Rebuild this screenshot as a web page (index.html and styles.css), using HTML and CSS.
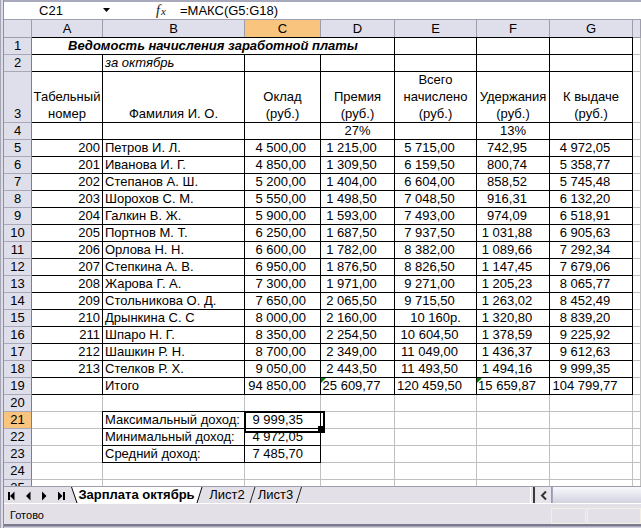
FILE: index.html
```html
<!DOCTYPE html>
<html lang="ru">
<head>
<meta charset="utf-8">
<title>Ведомость начисления заработной платы</title>
<link rel="stylesheet" href="styles.css">
</head>
<body>
<div class="app">
  <div class="frame"></div>
  <div class="main">
    <div class="fbar">
      <div class="namebox">C21</div>
      <div class="dd"><svg width="8" height="5" viewBox="0 0 8 5"><polygon points="0,0 7,0 3.5,4" fill="#000"/></svg></div>
      <div class="fxbox"><span class="fx-f">f</span><span class="fx-x">x</span></div>
      <div class="formula">=МАКС(G5:G18)</div>
    </div>

    <div class="sheet">
      <!-- column headers -->
      <div class="h"></div><div class="h">A</div><div class="h">B</div><div class="h hs">C</div><div class="h">D</div><div class="h">E</div><div class="h">F</div><div class="h">G</div><div class="h"></div>

      <!-- row 1 -->
      <div class="r">1</div><div class="g b t span4 title">Ведомость начисления заработной платы</div><div class="g b t"></div><div class="g b t"></div><div class="g b t"></div><div class="g"></div>
      <!-- row 2 -->
      <div class="r">2</div><div class="g b"></div><div class="g b al it">за октябрь</div><div class="g b"></div><div class="g b"></div><div class="g b"></div><div class="g b"></div><div class="g b"></div><div class="g"></div>
      <!-- row 3 -->
      <div class="r r3">3</div>
      <div class="g b hd3"><span>Табельный</span><span>номер</span></div>
      <div class="g b hd3"><span>Фамилия И. О.</span></div>
      <div class="g b hd3"><span>Оклад</span><span>(руб.)</span></div>
      <div class="g b hd3"><span>Премия</span><span>(руб.)</span></div>
      <div class="g b hd3"><span>Всего</span><span>начислено</span><span>(руб.)</span></div>
      <div class="g b hd3"><span>Удержания</span><span>(руб.)</span></div>
      <div class="g b hd3"><span>К выдаче</span><span>(руб.)</span></div>
      <div class="g"></div>
      <!-- row 4 -->
      <div class="r">4</div><div class="g b"></div><div class="g b"></div><div class="g b"></div><div class="g b ctr">27%</div><div class="g b"></div><div class="g b ctr">13%</div><div class="g b"></div><div class="g"></div>

      <!-- rows 5-18 -->
      <div class="r">5</div><div class="g b ar">200</div><div class="g b al">Петров И. Л.</div><div class="g b cr">4 500,00</div><div class="g b cc">1 215,00</div><div class="g b cc">5 715,00</div><div class="g b cc">742,95</div><div class="g b cc">4 972,05</div><div class="g"></div>
      <div class="r">6</div><div class="g b ar">201</div><div class="g b al">Иванова И. Г.</div><div class="g b cr">4 850,00</div><div class="g b cc">1 309,50</div><div class="g b cc">6 159,50</div><div class="g b cc">800,74</div><div class="g b cc">5 358,77</div><div class="g"></div>
      <div class="r">7</div><div class="g b ar">202</div><div class="g b al">Степанов А. Ш.</div><div class="g b cr">5 200,00</div><div class="g b cc">1 404,00</div><div class="g b cc">6 604,00</div><div class="g b cc">858,52</div><div class="g b cc">5 745,48</div><div class="g"></div>
      <div class="r">8</div><div class="g b ar">203</div><div class="g b al">Шорохов С. М.</div><div class="g b cr">5 550,00</div><div class="g b cc">1 498,50</div><div class="g b cc">7 048,50</div><div class="g b cc">916,31</div><div class="g b cc">6 132,20</div><div class="g"></div>
      <div class="r">9</div><div class="g b ar">204</div><div class="g b al">Галкин В. Ж.</div><div class="g b cr">5 900,00</div><div class="g b cc">1 593,00</div><div class="g b cc">7 493,00</div><div class="g b cc">974,09</div><div class="g b cc">6 518,91</div><div class="g"></div>
      <div class="r">10</div><div class="g b ar">205</div><div class="g b al">Портнов М. Т.</div><div class="g b cr">6 250,00</div><div class="g b cc">1 687,50</div><div class="g b cc">7 937,50</div><div class="g b cc">1 031,88</div><div class="g b cc">6 905,63</div><div class="g"></div>
      <div class="r">11</div><div class="g b ar">206</div><div class="g b al">Орлова Н. Н.</div><div class="g b cr">6 600,00</div><div class="g b cc">1 782,00</div><div class="g b cc">8 382,00</div><div class="g b cc">1 089,66</div><div class="g b cc">7 292,34</div><div class="g"></div>
      <div class="r">12</div><div class="g b ar">207</div><div class="g b al">Степкина А. В.</div><div class="g b cr">6 950,00</div><div class="g b cc">1 876,50</div><div class="g b cc">8 826,50</div><div class="g b cc">1 147,45</div><div class="g b cc">7 679,06</div><div class="g"></div>
      <div class="r">13</div><div class="g b ar">208</div><div class="g b al">Жарова Г. А.</div><div class="g b cr">7 300,00</div><div class="g b cc">1 971,00</div><div class="g b cc">9 271,00</div><div class="g b cc">1 205,23</div><div class="g b cc">8 065,77</div><div class="g"></div>
      <div class="r">14</div><div class="g b ar">209</div><div class="g b al">Стольникова О. Д.</div><div class="g b cr">7 650,00</div><div class="g b cc">2 065,50</div><div class="g b cc">9 715,50</div><div class="g b cc">1 263,02</div><div class="g b cc">8 452,49</div><div class="g"></div>
      <div class="r">15</div><div class="g b ar">210</div><div class="g b al">Дрынкина С. С</div><div class="g b cr">8 000,00</div><div class="g b cc">2 160,00</div><div class="g b ctr">10 160р.</div><div class="g b cc">1 320,80</div><div class="g b cc">8 839,20</div><div class="g"></div>
      <div class="r">16</div><div class="g b ar">211</div><div class="g b al">Шпаро Н. Г.</div><div class="g b cr">8 350,00</div><div class="g b cc">2 254,50</div><div class="g b cc">10 604,50</div><div class="g b cc">1 378,59</div><div class="g b cc">9 225,92</div><div class="g"></div>
      <div class="r">17</div><div class="g b ar">212</div><div class="g b al">Шашкин Р. Н.</div><div class="g b cr">8 700,00</div><div class="g b cc">2 349,00</div><div class="g b cc">11 049,00</div><div class="g b cc">1 436,37</div><div class="g b cc">9 612,63</div><div class="g"></div>
      <div class="r">18</div><div class="g b ar">213</div><div class="g b al">Стелков Р. Х.</div><div class="g b cr">9 050,00</div><div class="g b cc">2 443,50</div><div class="g b cc">11 493,50</div><div class="g b cc">1 494,16</div><div class="g b cc">9 999,35</div><div class="g"></div>
      <!-- row 19 -->
      <div class="r">19</div><div class="g b"></div><div class="g b al">Итого</div><div class="g b cr">94 850,00</div><div class="g b cc err">25 609,77</div><div class="g b cc">120 459,50</div><div class="g b cc err">15 659,87</div><div class="g b cc">104 799,77</div><div class="g"></div>
      <!-- row 20 -->
      <div class="r">20</div><div class="g"></div><div class="g"></div><div class="g"></div><div class="g"></div><div class="g"></div><div class="g"></div><div class="g"></div><div class="g"></div>
      <!-- rows 21-23 -->
      <div class="r hs">21</div><div class="g"></div><div class="g b tl al">Максимальный доход:</div><div class="g b t cr2 active">9 999,35</div><div class="g"></div><div class="g"></div><div class="g"></div><div class="g"></div><div class="g"></div>
      <div class="r">22</div><div class="g"></div><div class="g b l al">Минимальный доход:</div><div class="g b cr2">4 972,05</div><div class="g"></div><div class="g"></div><div class="g"></div><div class="g"></div><div class="g"></div>
      <div class="r">23</div><div class="g"></div><div class="g b l al">Средний доход:</div><div class="g b cr2">7 485,70</div><div class="g"></div><div class="g"></div><div class="g"></div><div class="g"></div><div class="g"></div>
      <!-- rows 24-25 -->
      <div class="r">24</div><div class="g"></div><div class="g"></div><div class="g"></div><div class="g"></div><div class="g"></div><div class="g"></div><div class="g"></div><div class="g"></div>
      <div class="r">25</div><div class="g"></div><div class="g"></div><div class="g"></div><div class="g"></div><div class="g"></div><div class="g"></div><div class="g"></div><div class="g"></div>
    </div>

    <div class="tabbar">
      <div class="nav">
        <svg width="67" height="16" viewBox="0 0 67 16">
          <rect x="4" y="5" width="2" height="8" fill="#000"/>
          <polygon points="6,9 10.5,4.5 10.5,13.5" fill="#000"/>
          <polygon points="22,9 26.5,4.5 26.5,13.5" fill="#000"/>
          <polygon points="38,4.5 42.5,9 38,13.5" fill="#000"/>
          <polygon points="54,4.5 58.5,9 54,13.5" fill="#000"/>
          <rect x="59" y="5" width="2" height="8" fill="#000"/>
        </svg>
      </div>
      <div class="tabs">
        <svg class="tabshape" width="231" height="16" viewBox="0 0 231 16">
          <polygon points="0,0 131,0 126,16 6,16" fill="#fff"/>
          <line x1="0.5" y1="0" x2="6" y2="16" stroke="#000" stroke-width="1"/>
          <line x1="131" y1="0" x2="126" y2="16" stroke="#000" stroke-width="1"/>
          <line x1="184" y1="0" x2="179" y2="16" stroke="#222" stroke-width="1"/>
          <line x1="230.5" y1="0" x2="225.5" y2="16" stroke="#222" stroke-width="1"/>
        </svg>
        <span class="tab act">Зарплата октябрь</span>
        <span class="tab t2">Лист2</span>
        <span class="tab t3">Лист3</span>
      </div>
      <div class="tabfill"></div>
      <div class="hscroll">
        <svg width="111" height="16" viewBox="0 0 111 16">
          <defs>
            <linearGradient id="thumb" x1="0" y1="0" x2="0" y2="1">
              <stop offset="0" stop-color="#f8f8fc"/>
              <stop offset="1" stop-color="#d2d2e0"/>
            </linearGradient>
          </defs>
          <rect x="0" y="0" width="1" height="16" fill="#ffffff"/>
          <rect x="3" y="0" width="2" height="16" fill="#3a3a3a"/>
          <rect x="6" y="0" width="16" height="16" fill="#e7e4ec"/>
          <rect x="21" y="0" width="1" height="16" fill="#9a9aae"/>
          <polyline points="16,4.5 12,8.5 16,12.5" fill="none" stroke="#333" stroke-width="2"/>
          <rect x="22" y="0" width="89" height="16" fill="url(#thumb)"/>
          <rect x="22" y="0" width="1" height="16" fill="#a8a8bc"/>
        </svg>
      </div>
    </div>

    <div class="status">
      <span class="ready">Готово</span>
      <span class="panel p1"></span>
      <span class="panel p2"></span>
    </div>
    <div class="bottom"></div>
  </div>
</div>
</body>
</html>
```

FILE: styles.css
```css
* { box-sizing: border-box; }
html, body { margin: 0; padding: 0; }
body {
  width: 641px;
  height: 528px;
  overflow: hidden;
  background: #fff;
  color: #000;
  font-family: "Liberation Sans", Arial, sans-serif;
  font-size: 13px;
}

.app { display: flex; width: 641px; height: 528px; overflow: hidden; }
.frame {
  width: 4px;
  flex: none;
  background: linear-gradient(to right, #a6a6b6 0 1px, #dcdce6 1px 3px, #8e8ea2 3px 4px);
}
.main { flex: 1; display: flex; flex-direction: column; min-width: 0; }

/* formula bar */
.fbar {
  height: 20px;
  flex: none;
  display: flex;
  border-top: 2px solid #a9a9bd;
  border-bottom: 1px solid #a0a0b0;
  background: #fff;
  line-height: 17px;
}
.namebox { width: 94px; text-align: center; }
.dd { width: 20px; display: flex; align-items: center; justify-content: center; padding-right: 2px; }
.dd svg { display: block; }
.fxbox {
  width: 60px;
  padding-left: 38px;
  font-family: "Liberation Serif", serif;
  font-style: italic;
  color: #111;
}
.fx-f { font-size: 14px; }
.fx-x { font-size: 11px; margin-left: 1px; }
.formula { padding-left: 2px; white-space: nowrap; }

/* sheet grid */
.sheet {
  height: 466px;
  flex: none;
  overflow: hidden;
  display: grid;
  grid-template-columns: 28px 71px 142px 76px 74px 82px 73px 83px 1fr;
  grid-template-rows: 18px 17px 17px 51px repeat(22, 17px);
}
.h {
  background: #dfdfec;
  border-right: 1px solid #9d9dab;
  border-bottom: 1px solid #9d9dab;
  text-align: center;
  line-height: 16px;
  padding-top: 1px;
}
.r {
  background: #dfdfec;
  border-right: 1px solid #7e7e8a;
  border-bottom: 1px solid #a8a8b8;
  text-align: center;
  line-height: 16px;
}
.r3 { display: flex; align-items: flex-end; justify-content: center; }
.hs { background: #f8c47e; }

.g {
  border-right: 1px solid #c0c0c0;
  border-bottom: 1px solid #c0c0c0;
  line-height: 16px;
  white-space: nowrap;
}
.b { border-right-color: #000; border-bottom-color: #000; }
.t { box-shadow: 0 -1px 0 #000; }
.l { box-shadow: -1px 0 0 #000; }
.tl { box-shadow: -1px 0 0 #000, 0 -1px 0 #000, -1px -1px 0 #000; }
.span4 { grid-column: span 4; }
.title { font-weight: bold; font-style: italic; text-align: center; }
.it { font-style: italic; }
.al { padding-left: 2px; }
.ar { text-align: right; padding-right: 2px; }
.cr { text-align: right; padding-right: 14px; }
.cr2 { text-align: right; padding-right: 17px; }
.cc { text-align: center; padding-right: 12px; }
.ctr { text-align: center; }
.hd3 {
  display: flex;
  flex-direction: column;
  justify-content: flex-end;
  align-items: center;
  text-align: center;
  line-height: 17px;
}

.err { position: relative; }
.err::before {
  content: "";
  position: absolute;
  left: 0;
  top: 0;
  border-top: 5px solid #008000;
  border-right: 5px solid transparent;
}

.active { position: relative; }
.active::after {
  content: "";
  position: absolute;
  left: -1px;
  top: -1px;
  width: 77px;
  height: 18px;
  border: 2px solid #000;
}
.active::before {
  content: "";
  position: absolute;
  right: -3px;
  bottom: -3px;
  width: 5px;
  height: 5px;
  background: #000;
  z-index: 1;
}

/* sheet tabs */
.tabbar {
  height: 17px;
  flex: none;
  display: flex;
  border-top: 1px solid #9d9dab;
  background: #e4e0e8;
}
.nav { width: 67px; flex: none; }
.nav svg, .hscroll svg { display: block; }
.tabs { position: relative; width: 231px; flex: none; display: flex; line-height: 16px; }
.tabshape { position: absolute; left: 0; top: 0; }
.tab { position: relative; text-align: center; white-space: nowrap; }
.act { width: 131px; font-weight: bold; }
.t2 { width: 50px; }
.t3 { width: 47px; }
.tabfill { flex: 1; }
.hscroll { width: 111px; flex: none; }

/* status bar */
.status {
  height: 21px;
  flex: none;
  display: flex;
  align-items: flex-start;
  border-top: 1px solid #fff;
  background: #e4e0e8;
  font-size: 11px;
}
.ready { padding-left: 6px; line-height: 20px; padding-top: 1px; }
.panel { height: 16px; margin-top: 4px; border: 1px solid #f3efe2; }
.p1 { margin-left: auto; width: 35px; }
.p2 { width: 54px; margin-left: 1px; }
.bottom {
  height: 4px;
  flex: none;
  background: linear-gradient(#7a7a8e 0 2px, #a6a6b8 2px 3px, #cfcfdc 3px);
}
```
